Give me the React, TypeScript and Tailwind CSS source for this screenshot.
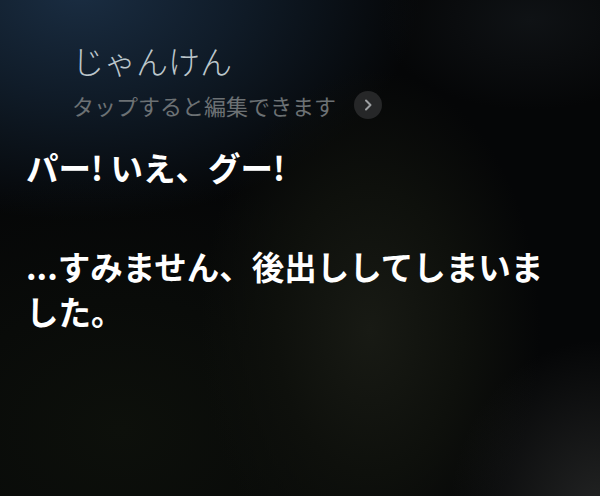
import React from "react";

export default function App() {
  return (
    <div className="relative w-[600px] h-[496px] overflow-hidden bg-[#050607] font-['Noto_Sans_CJK_JP',sans-serif]">
      <div className="absolute inset-0 bg-[radial-gradient(ellipse_340px_230px_at_80px_-10px,#1a2d42_0%,#101c29_45%,transparent_100%)]" />
      <div className="absolute inset-0 bg-[radial-gradient(ellipse_330px_260px_at_120px_430px,#0d100b_0%,transparent_100%)]" />
      <div className="absolute inset-0 bg-[radial-gradient(ellipse_170px_260px_at_370px_330px,#181a14_0%,#0e100c_55%,transparent_100%)]" />
      <div className="absolute inset-0 bg-[radial-gradient(ellipse_150px_170px_at_600px_510px,#222323_0%,transparent_100%)]" />
      <div className="absolute inset-0 bg-[radial-gradient(ellipse_150px_90px_at_530px_20px,#0f1215_0%,transparent_100%)]" />
      <div className="relative flex flex-col">
        <div className="pl-[72px] pt-[38px]">
          <h1 className="text-[32px] leading-[44px] font-light text-[#bcc6cb]">
            じゃんけん
          </h1>
          <div className="mt-[8px] flex items-center gap-[18px]">
            <span className="text-[22px] leading-[30px] font-normal text-[#6c7174]">
              タップすると編集できます
            </span>
            <span className="flex h-[28px] w-[28px] items-center justify-center rounded-full bg-[#262728]">
              <svg width="12" height="14" viewBox="0 0 12 14" fill="none">
                <path d="M4 2.5 L8.5 7 L4 11.5" stroke="#9c9fa1" strokeWidth="2" strokeLinecap="round" strokeLinejoin="round" />
              </svg>
            </span>
          </div>
        </div>
        <div className="w-[560px] pl-[26px] pt-[24px] text-white font-bold text-[32.5px] leading-[45px]">
          <p>パー! いえ、グー!</p>
          <p className="mt-[54px]">...すみません、後出ししてしまいました。</p>
        </div>
      </div>
    </div>
  );
}
